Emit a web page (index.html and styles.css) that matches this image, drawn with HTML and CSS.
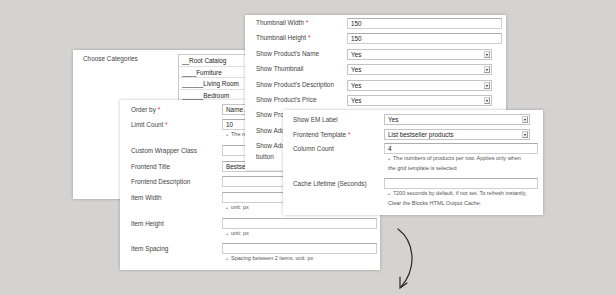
FILE: index.html
```html
<!DOCTYPE html>
<html lang="en">
<head>
    <meta charset="UTF-8">
    <title>Bestseller Products - Widget Options</title>
    <link rel="stylesheet" href="styles.css">
</head>
<body>
    <div class="canvas">

        <div class="panel panel-categories">
            <div class="cat-label">Choose Categories</div>
            <div class="cat-list">
                <div class="cat-item">__Root Catalog</div>
                <div class="cat-item">____Furniture</div>
                <div class="cat-item">______Living Room</div>
                <div class="cat-item">______Bedroom</div>
                <div class="cat-item">______Office</div>
                <div class="cat-item">____Electronics</div>
            </div>
        </div>

        <div class="panel panel-general">
            <div class="form">
                <div class="label">Order by <span class="req">*</span></div>
                <div class="field"><div class="select">Name Ascending<span class="arrow"></span></div></div>

                <div class="label">Limit Count <span class="req">*</span></div>
                <div class="field">
                    <div class="input">10</div>
                    <div class="note">The numbers of products to show</div>
                </div>

                <div class="label">Custom Wrapper Class</div>
                <div class="field"><div class="input"></div></div>

                <div class="label">Frontend Title</div>
                <div class="field"><div class="input">Bestseller Products</div></div>

                <div class="label">Frontend Description</div>
                <div class="field"><div class="input"></div></div>

                <div class="label">Item Width</div>
                <div class="field">
                    <div class="input"></div>
                    <div class="note">unit: px</div>
                </div>

                <div class="label">Item Height</div>
                <div class="field">
                    <div class="input"></div>
                    <div class="note">unit: px</div>
                </div>

                <div class="label">Item Spacing</div>
                <div class="field">
                    <div class="input"></div>
                    <div class="note">Spacing between 2 items. unit: px</div>
                </div>
            </div>
        </div>

        <div class="panel panel-display">
            <div class="form">
                <div class="label">Thumbnail Width <span class="req">*</span></div>
                <div class="field"><div class="input">150</div></div>

                <div class="label">Thumbnail Height <span class="req">*</span></div>
                <div class="field"><div class="input">150</div></div>

                <div class="label">Show Product's Name</div>
                <div class="field"><div class="select">Yes<span class="arrow"></span></div></div>

                <div class="label">Show Thumbnail</div>
                <div class="field"><div class="select">Yes<span class="arrow"></span></div></div>

                <div class="label">Show Product's Description</div>
                <div class="field"><div class="select">Yes<span class="arrow"></span></div></div>

                <div class="label">Show Product's Price</div>
                <div class="field"><div class="select">Yes<span class="arrow"></span></div></div>

                <div class="label">Show Product's Rating</div>
                <div class="field"><div class="select">Yes<span class="arrow"></span></div></div>

                <div class="label">Show Add to Cart</div>
                <div class="field"><div class="select">Yes<span class="arrow"></span></div></div>

                <div class="label">Show Add to Wishlist<br>button</div>
                <div class="field"><div class="select">Yes<span class="arrow"></span></div></div>
            </div>
        </div>

        <div class="panel panel-advanced">
            <div class="form">
                <div class="label">Show EM Label</div>
                <div class="field"><div class="select">Yes<span class="arrow"></span></div></div>

                <div class="label">Frontend Template <span class="req">*</span></div>
                <div class="field"><div class="select">List bestseller products<span class="arrow"></span></div></div>

                <div class="label">Column Count</div>
                <div class="field">
                    <div class="input wide">4</div>
                    <div class="note">The numbers of products per row. Applies only when<br>the grid template is selected</div>
                </div>

                <div class="label">Cache Lifetime (Seconds)</div>
                <div class="field">
                    <div class="input wide"></div>
                    <div class="note">7200 seconds by default, if not set. To refresh instantly,<br>Clear the Blocks HTML Output Cache.</div>
                </div>
            </div>
        </div>

        <svg class="curl-arrow" width="40" height="70" viewBox="0 0 40 70" fill="none" stroke="#2a2a2a" stroke-width="1.2" stroke-linecap="round">
            <path d="M8 4 C 24 16, 28 42, 11 62"/>
            <path d="M10 52 L 10 63 L 17 58"/>
        </svg>

    </div>
</body>
</html>
```

FILE: styles.css
```css
* {
    margin: 0;
    padding: 0;
    box-sizing: border-box;
}

body {
    font-family: 'Liberation Sans', Arial, sans-serif;
    background: #d4d3d1;
    color: #444;
    width: 616px;
    height: 295px;
    overflow: hidden;
}

.canvas {
    position: relative;
    width: 616px;
    height: 295px;
}

/* each screenshot panel sits on the canvas like a window */
.panel {
    position: absolute;
    background: #fff;
    box-shadow: 0 0 3px rgba(0, 0, 0, 0.25);
    font-size: 6.4px;
}

.panel-categories {
    left: 73px;
    top: 50px;
    width: 240px;
    height: 149px;
    display: flex;
    align-items: flex-start;
    padding: 4px 0 0 10px;
}

.cat-label {
    width: 95px;
    line-height: 10px;
}

.cat-list {
    flex: 1;
    border: 1px solid #c9c9c9;
    border-right: none;
    height: 120px;
    overflow: hidden;
}

.cat-item {
    height: 11.6px;
    line-height: 11px;
    padding-left: 3px;
    color: #222;
    border-bottom: 1px solid #e2e2e2;
}

.panel-general {
    left: 120px;
    top: 100px;
    width: 260px;
    height: 170px;
    padding: 3.5px 3px 0 11px;
}

.panel-display {
    left: 245px;
    top: 15px;
    width: 261px;
    height: 155px;
    padding: 3px 4px 0 11px;
}

.panel-advanced {
    left: 283px;
    top: 110px;
    width: 260px;
    height: 105px;
    padding: 4px 5px 0 10px;
}

.form {
    display: grid;
    grid-template-columns: 91px 1fr;
    row-gap: 4.8px;
    align-items: start;
}

.panel-display .form {
    row-gap: 4.4px;
}

.panel-advanced .form {
    row-gap: 3.5px;
}

.label {
    line-height: 11px;
    white-space: nowrap;
}

.panel-display .label {
    line-height: 10.5px;
}

.req {
    color: #e02b27;
}

.field {
    min-width: 0;
}

.input,
.select {
    position: relative;
    height: 11px;
    line-height: 9px;
    padding-left: 3px;
    color: #222;
    background: #fff;
    border: 1px solid #cfcfcf;
    border-top-color: #adadad;
    white-space: nowrap;
    overflow: hidden;
}

.panel-display .select {
    width: 145px;
}

.panel-advanced .select {
    width: 146px;
}

.panel-advanced .input.wide {
    width: 154px;
}

.select {
    border-color: #c4c4c4;
}

.arrow {
    position: absolute;
    right: 1px;
    top: 1px;
    width: 6px;
    height: 7px;
    background: #f2f2f2;
    border: 1px solid #9a9a9a;
    border-top-color: #ccc;
    border-left-color: #ccc;
}

.arrow::after {
    content: "";
    position: absolute;
    left: 1px;
    top: 2px;
    border-left: 1.5px solid transparent;
    border-right: 1.5px solid transparent;
    border-top: 2px solid #222;
}

.note {
    font-size: 5.5px;
    line-height: 8.8px;
    color: #555;
    padding-left: 4px;
    white-space: nowrap;
}

.note::before {
    content: "\25B4";
    font-size: 4px;
    color: #999;
    margin-right: 3px;
}

.panel-advanced .note {
    line-height: 9.5px;
    padding-bottom: 1.5px;
}

.curl-arrow {
    position: absolute;
    left: 390px;
    top: 225px;
}
```
